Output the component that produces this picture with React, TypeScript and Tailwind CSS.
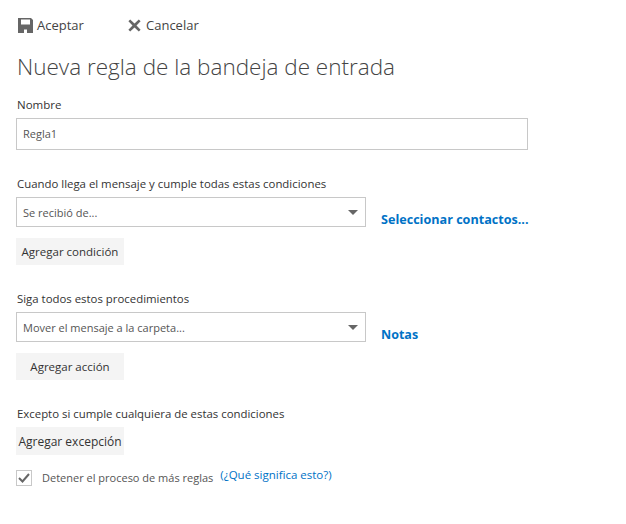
const font = { fontFamily: '"Open Sans", "Noto Sans", sans-serif' };

function SaveIcon() {
  return (
    <svg width="15" height="15" viewBox="0 0 15 15" className="text-[#666666] -translate-y-px">
      <path
        fill="currentColor"
        fillRule="evenodd"
        d="M0 0h13L15 2V15H0V0zM3 1.5v5h9v-5H3zM6 11.5v3.5h3v-3.5H6z"
      />
    </svg>
  );
}

function CloseIcon() {
  return (
    <svg width="13" height="13" viewBox="0 0 13 13" className="text-[#666666] -translate-y-px">
      <path fill="currentColor" d="M2.2 0.4 6.5 4.4 10.8 0.4 12.6 2.2 8.5 6.5 12.6 10.8 10.8 12.6 6.5 8.6 2.2 12.6 0.4 10.8 4.5 6.5 0.4 2.2z" />
    </svg>
  );
}

function FakeSelect({ value }: { value: string }) {
  return (
    <div className="flex items-center justify-between w-[350px] h-[30px] border border-[#c8c8c8] bg-white pl-[6px] pr-[7px] flex-shrink-0">
      <span className="text-[11px] text-[#555555] leading-none">{value}</span>
      <span className="w-0 h-0 border-l-[5px] border-r-[5px] border-t-[5px] border-l-transparent border-r-transparent border-t-[#666666]" />
    </div>
  );
}

function GrayButton({ label }: { label: string }) {
  return (
    <div className="flex items-center justify-center w-[108px] h-[27px] bg-[#f4f4f4] text-[11.5px] text-[#333333] whitespace-nowrap">
      {label}
    </div>
  );
}

export default function App() {
  return (
    <div className="w-[626px] h-[524px] bg-white px-4 pt-[18px] overflow-hidden" style={font}>
      {/* Toolbar */}
      <div className="flex items-center h-[16px] pl-[2px]">
        <div className="flex items-center gap-[4px] w-[110px]">
          <SaveIcon />
          <span className="text-[13px] text-[#444444]">Aceptar</span>
        </div>
        <div className="flex items-center gap-[5px]">
          <CloseIcon />
          <span className="text-[13px] text-[#444444]">Cancelar</span>
        </div>
      </div>

      <h1 className="mt-[16px] h-[33px] pl-[1px] text-[22.5px] leading-[33px] font-light text-[#444444] whitespace-nowrap">
        Nueva regla de la bandeja de entrada
      </h1>

      {/* Nombre */}
      <div className="mt-[14px] pl-[1px] text-[11.5px] leading-[16px] text-[#333333]">Nombre</div>
      <div className="mt-[5px] flex items-center w-[512px] h-[32px] border border-[#c8c8c8] pl-[6px] text-[11px] text-[#555555]">
        Regla1
      </div>

      {/* Condiciones */}
      <div className="mt-[26px] pl-[1px] text-[11.4px] leading-[16px] text-[#333333]">
        Cuando llega el mensaje y cumple todas estas condiciones
      </div>
      <div className="mt-[5px] flex items-end gap-[15px]">
        <FakeSelect value="Se recibió de..." />
        <a className="translate-y-px text-[12.6px] font-bold text-[#0072c6] whitespace-nowrap leading-[16px]">Seleccionar contactos...</a>
      </div>
      <div className="mt-[11px]">
        <GrayButton label="Agregar condición" />
      </div>

      {/* Procedimientos */}
      <div className="mt-[26px] pl-[1px] text-[11.4px] leading-[16px] text-[#333333]">Siga todos estos procedimientos</div>
      <div className="mt-[5px] flex items-end gap-[15px]">
        <FakeSelect value="Mover el mensaje a la carpeta..." />
        <a className="translate-y-px text-[12.5px] font-bold text-[#0072c6] leading-[16px]">Notas</a>
      </div>
      <div className="mt-[11px]">
        <GrayButton label="Agregar acción" />
      </div>

      {/* Excepciones */}
      <div className="mt-[26px] pl-[1px] text-[11.4px] leading-[16px] text-[#333333]">
        Excepto si cumple cualquiera de estas condiciones
      </div>
      <div className="mt-[5px]">
        <div className="flex items-center justify-center w-[108px] h-[28px] pt-[2px] bg-[#f4f4f4] text-[12px] text-[#333333] whitespace-nowrap">
          Agregar excepción
        </div>
      </div>

      <div className="mt-[15px] flex items-start">
        <div className="flex items-center justify-center w-[16px] h-[16px] border border-[#c8c8c8]">
          <svg width="12" height="10" viewBox="0 0 12 10" className="text-[#666666]">
            <path fill="none" stroke="currentColor" strokeWidth="2" d="M1 5 4.5 8.5 11 1" />
          </svg>
        </div>
        <span className="ml-[10px] text-[11px] leading-[16px] text-[#555555] whitespace-nowrap">
          Detener el proceso de más reglas
        </span>
        <a className="ml-[7px] -mt-[3px] text-[11.5px] leading-[16px] text-[#0072c6] whitespace-nowrap">
          (¿Qué significa esto?)
        </a>
      </div>
    </div>
  );
}
